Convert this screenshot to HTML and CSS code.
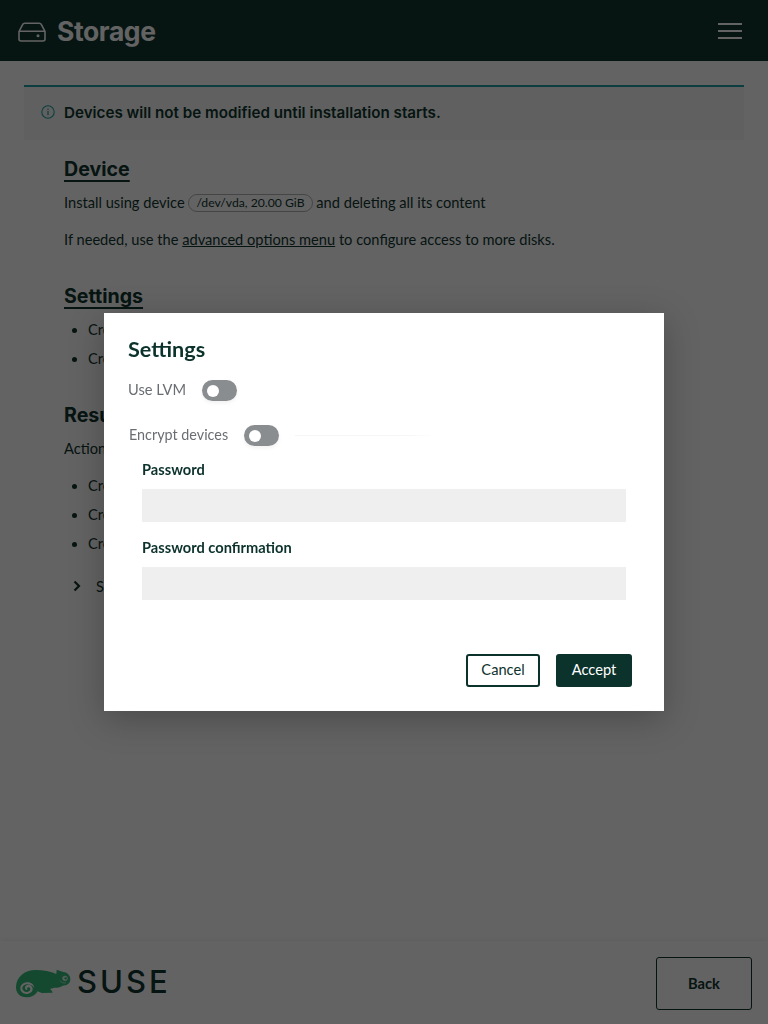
FILE: index.html
```html
<!DOCTYPE html>
<html lang="en">
<head>
<meta charset="utf-8">
<title>Storage</title>
<link rel="stylesheet" href="styles.css">
</head>
<body>
<div class="page">
  <header class="topbar">
    <div class="topbar-title">
      <svg class="drive-icon" viewBox="0 0 28 20" width="28" height="20" aria-hidden="true">
        <path d="M1 9.5 4.6 2.6C5 1.7 5.8 1.2 6.8 1.2H21.2C22.2 1.2 23 1.7 23.4 2.6L27 9.5V17C27 18.1 26.1 19 25 19H3C1.9 19 1 18.1 1 17ZM1 9.2H27" fill="none" stroke="currentColor" stroke-width="1.6"/>
        <circle cx="20" cy="13.8" r="1.5" fill="currentColor"/>
      </svg>
      <h1>Storage</h1>
    </div>
    <div class="burger"><span></span><span></span><span></span></div>
  </header>
  <main class="content">
    <div class="alert">
      <svg class="info-icon" viewBox="0 0 14 14" width="14" height="14" aria-hidden="true">
        <circle cx="7" cy="7" r="6.2" fill="none" stroke="currentColor" stroke-width="1.1"/>
        <rect x="6.4" y="6" width="1.2" height="4.2" fill="currentColor"/>
        <rect x="6.4" y="3.7" width="1.2" height="1.3" fill="currentColor"/>
      </svg>
      <strong>Devices will not be modified until installation starts.</strong>
    </div>
    <section class="block block-device">
      <h2>Device</h2>
      <p class="line">Install using device <span class="chip">/dev/vda, 20.00 GiB</span> and deleting all its content</p>
      <p class="line line-gap">If needed, use the <a href="#">advanced options menu</a> to configure access to more disks.</p>
    </section>
    <section class="block block-settings">
      <h2>Settings</h2>
      <ul>
        <li>Create an LVM group</li>
        <li>Create partitions</li>
      </ul>
    </section>
    <section class="block block-result">
      <h2>Result</h2>
      <p class="line line-action">Actions to perform</p>
      <ul>
        <li>Create GPT table</li>
        <li>Create partition</li>
        <li>Create partition</li>
      </ul>
      <div class="details">
        <svg class="chevron" viewBox="0 0 8 12" width="8" height="12" aria-hidden="true"><path d="M1.5 1.5 6 6 1.5 10.5" fill="none" stroke="currentColor" stroke-width="2.2"/></svg>
        <span>See details</span>
      </div>
    </section>
  </main>
  <footer class="footer">
    <div class="brand">
      <svg class="chameleon" viewBox="45 112 168 90" width="56" height="30" aria-hidden="true">
        <path class="cham-body" fill-rule="evenodd" d="M48 170C48 140 72 118 108 118C130 118 152 122 169 130L170 117L190 124C203 126 211 134 211 146C211 158 201 165 188 165C180 170 172 172 163 171L150 175C154 178 157 182 158 186L125 187L113 182C106 194 94 200 80 200C60 200 48 188 48 170ZM83 155C70 155 61 163 61 173C61 183 69 190 79 190C90 190 98 183 98 175C98 167 92 162 85 162C79 162 75 166 75 171C75 175 78 178 82 178C80 174 82 170 85 170C88 170 91 172 91 175C91 180 86 184 80 184C73 184 67 179 67 173C67 166 74 161 82 161C91 161 98 165 103 172C102 162 94 155 83 155Z"/>
        <circle class="cham-eye" cx="195" cy="143" r="8"/>
        <circle class="cham-body" cx="197" cy="143" r="3.5"/>
        <path class="cham-mouth" d="M180 150C184 157 192 158 198 156"/>
      </svg>
      <span class="suse">SUSE</span>
    </div>
    <button class="back" type="button">Back</button>
  </footer>
</div>
<div class="backdrop">
  <div class="modal" role="dialog">
    <h3>Settings</h3>
    <div class="switch-row">
      <span class="switch-label">Use LVM</span>
      <span class="switch"></span>
    </div>
    <div class="legend-row">
      <span class="switch-label switch-label-narrow">Encrypt devices</span>
      <span class="switch"></span>
      <span class="legend-rule"></span>
    </div>
    <div class="fields">
      <label class="field-label" for="pw">Password</label>
      <input class="field" id="pw" type="password">
      <label class="field-label field-label-second" for="pw2">Password confirmation</label>
      <input class="field" id="pw2" type="password">
    </div>
    <div class="actions">
      <button class="btn btn-secondary" type="button">Cancel</button>
      <button class="btn btn-primary" type="button">Accept</button>
    </div>
  </div>
</div>
</body>
</html>
```
FILE: styles.css
```css
* { box-sizing: border-box; }
html, body { margin: 0; padding: 0; height: 100%; }
body { font-family: "Lato", "Liberation Sans", sans-serif; font-size: 14.65px; color: #0c322c; background: #fff; font-variant-ligatures: common-ligatures; }
.page { height: 1024px; display: flex; flex-direction: column; overflow: hidden; }

.topbar { flex: 0 0 61px; background: #0c322c; color: #fff; display: flex; align-items: center; justify-content: space-between; padding: 0 26px 0 18px; }
.topbar-title { display: flex; align-items: center; gap: 11px; }
.drive-icon { margin-top: 2px; }
.topbar h1 { margin: 0; font-family: "Inter", sans-serif; font-size: 26.5px; font-weight: 700; line-height: 30px; letter-spacing: -0.4px; }
.burger { display: flex; flex-direction: column; gap: 5px; width: 24px; margin-top: 1px; }
.burger span { display: block; height: 2px; background: #fff; }

.content { flex: 1 1 auto; padding: 24px 24px 0; }
.alert { height: 55px; border-top: 2px solid #1f9ea0; background: #f4f8f5; display: flex; align-items: center; padding: 0 0 3px 17px; gap: 9px; }
.info-icon { color: #1f9ea0; flex: none; }
.alert strong { font-family: "Inter", sans-serif; font-size: 15.2px; font-weight: 600; }

.block { padding-left: 40px; }
.block-device { margin-top: 15px; }
h2 { margin: 0; font-family: "Inter", sans-serif; font-size: 19.6px; font-weight: 700; line-height: 28px; text-decoration: underline; text-decoration-thickness: 2px; text-underline-offset: 4px; }
.block-device h2 { margin-bottom: 8px; }
.line { margin: 0; line-height: 24px; }
.line-gap { margin-top: 13px; }
.chip { display: inline-block; border: 1px solid #b0b0b0; border-radius: 9px; font-size: 12.2px; line-height: 16px; padding: 0 7px; vertical-align: 1px; }
a { color: inherit; }
.block-settings { margin-top: 30px; }
.block-settings h2 { margin-bottom: 9px; }
.block-result { margin-top: 32px; }
.block-result h2 { text-decoration: none; }
.line-action { margin-top: 8px; }
ul { margin: 0; padding-left: 24px; list-style: disc; }
li { line-height: 21px; margin-bottom: 8px; }
.line-action + ul { margin-top: 14px; }
.details { display: flex; align-items: center; margin-top: 20px; padding-left: 9px; gap: 15px; height: 24px; }

.footer { flex: 0 0 83px; display: flex; align-items: center; justify-content: space-between; padding: 0 16px; box-shadow: 0 -2px 4px rgba(0,0,0,.04); }
.brand { display: flex; align-items: center; gap: 6px; margin-left: -1px; }
.chameleon { margin-top: 1px; }
.cham-body { fill: #30ba78; }
.cham-eye { fill: #d8eee2; }
.cham-mouth { fill: none; stroke: #d8eee2; stroke-width: 2; }
.suse { font-family: "Inter", "Lato", sans-serif; font-size: 31px; font-weight: 500; letter-spacing: 3px; line-height: 1; margin-top: -3px; }
.back { width: 96px; height: 53px; margin-top: 2px; border: 1px solid #0c322c; border-radius: 3px; background: transparent; color: #0c322c; font-family: inherit; font-size: 14.65px; font-weight: 700; }

.backdrop { position: fixed; inset: 0; background: rgba(3,3,3,.62); display: flex; align-items: center; justify-content: center; }
.modal { width: 560px; height: 398px; background: #fff; padding: 23px 32px 24px 24px; box-shadow: 0 8px 32px rgba(0,0,0,.25); display: flex; flex-direction: column; }
.modal h3 { margin: 0; font-size: 21.6px; font-weight: 700; line-height: 26px; color: #0c322c; }
.switch-row { display: flex; align-items: center; gap: 16px; margin-top: 18px; height: 21px; }
.legend-row { display: flex; align-items: center; gap: 16px; margin-top: 24px; height: 21px; padding-left: 1px; }
.switch-label { color: #6a6e73; line-height: 18px; margin-top: -2px; }
.switch-label-narrow { font-size: 14.35px; }
.switch { position: relative; display: block; width: 35px; height: 21px; border-radius: 11px; background: #8a8d90; box-shadow: 0 2px 4px rgba(0,0,0,.06); flex: none; }
.switch::before { content: ""; position: absolute; left: 5px; top: 5px; width: 12px; height: 12px; border-radius: 50%; background: #fff; }
.legend-rule { flex: 1; height: 1px; background: linear-gradient(90deg, #f5f5f5, #f5f5f5 110px, #fff 140px); }
.fields { padding: 15px 6px 0 14px; display: flex; flex-direction: column; }
.field-label { font-weight: 700; line-height: 18px; color: #0c322c; }
.field-label-second { margin-top: 17px; }
.field { display: block; width: 100%; height: 33px; margin-top: 10px; background: #efefef; border: 0; padding: 0 8px; }
.actions { margin-top: auto; display: flex; justify-content: flex-end; gap: 16px; }
.btn { height: 33px; border-radius: 3px; font-family: inherit; font-size: 14.65px; line-height: 26px; font-weight: 400; padding: 0 0 2px; }
.btn-secondary { width: 74px; background: #fff; color: #0c322c; border: 2px solid #0c322c; }
.btn-primary { width: 76px; background: #0c322c; color: #fff; border: 2px solid #0c322c; }
```
